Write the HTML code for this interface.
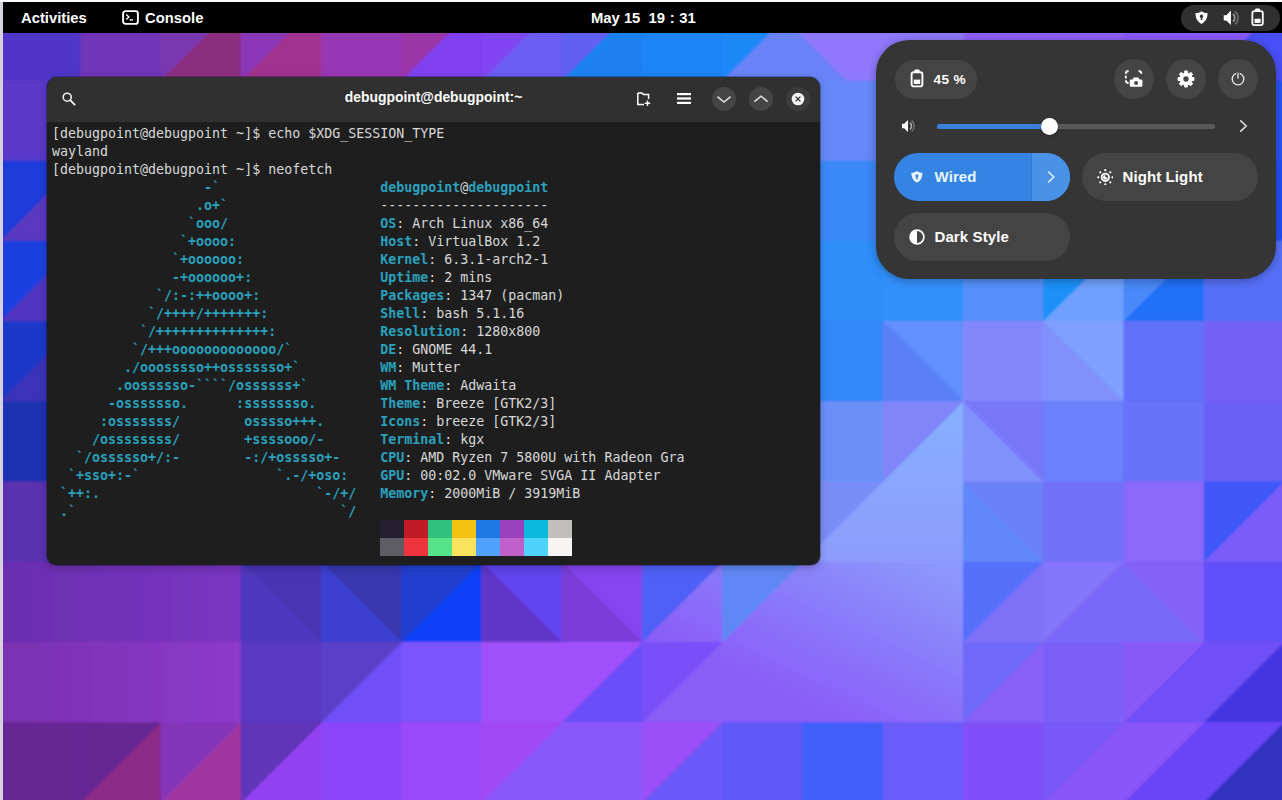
<!DOCTYPE html>
<html lang="en">
<head>
<meta charset="utf-8">
<title>GNOME 44 Wayland - Console</title>
<style>
*{box-sizing:border-box;margin:0;padding:0}
html,body{width:1282px;height:800px;overflow:hidden;background:#fff}
body{position:relative;font-family:"Liberation Sans","DejaVu Sans",sans-serif;color:#fff}
#wall{position:absolute;left:0;top:0;width:1282px;height:800px;display:block}
#edgeL{position:absolute;left:0;top:0;width:3px;height:800px;background:#d6d0e0}
#edgeT{position:absolute;left:0;top:0;width:1282px;height:2px;background:#fbfbfb}
#topbar{position:absolute;left:3px;top:2px;width:1279px;height:31.3px;background:#000;font-weight:bold;font-size:14.8px}
#topbar .t{position:absolute;top:1px;line-height:31px;white-space:pre}
#tray{position:absolute;left:1178px;top:3px;width:99px;height:25.5px;border-radius:13px;background:#303030}
/* terminal */
#term{position:absolute;left:47px;top:77px;width:773px;height:487.5px;border-radius:11px 11px 9px 9px;background:#1e1e1e;overflow:hidden;box-shadow:0 0 0 1px rgba(0,0,0,.25),0 3px 9px rgba(0,0,0,.22)}
#thead{position:absolute;left:0;top:0;width:100%;height:45px;background:#303030}
#ttitle{position:absolute;left:0;top:0;width:773px;text-align:center;line-height:41px;font-weight:bold;font-size:13.9px;color:#fff}
#tbody{position:absolute;left:5px;top:48px;font-family:"DejaVu Sans Mono","Liberation Mono",monospace;font-size:13.3px;line-height:18px;color:#d8d8d8;white-space:pre;letter-spacing:0}
#tbody b{color:#2aa0bc;font-weight:bold}
.sw{position:absolute;width:24px;height:18px}
.cbtn{position:absolute;top:10px;width:24px;height:24px;border-radius:12px;background:#454545}
/* panel */
#qs{position:absolute;left:876px;top:40px;width:400px;height:239px;border-radius:33px;background:#353535;box-shadow:0 2px 10px rgba(0,0,0,.3)}
.pill{position:absolute;background:#444;border-radius:24px;font-weight:bold;font-size:15px;letter-spacing:.1px;line-height:48px;white-space:pre}
.rb{position:absolute;top:19px;width:40px;height:40px;border-radius:20px;background:#454545}
</style>
</head>
<body>
<svg id="wall" width="1282" height="800" viewBox="0 0 1282 800" shape-rendering="geometricPrecision">
<rect width="1282" height="800" fill="#6a50e0"/>
<defs>
<linearGradient id="gA" gradientUnits="userSpaceOnUse" x1="900" y1="550" x2="820" y2="720"><stop offset="0" stop-color="#8c98fc"/><stop offset="0.45" stop-color="#8a7cfa"/><stop offset="1" stop-color="#8a5cf8"/></linearGradient>
<linearGradient id="gL" gradientUnits="userSpaceOnUse" x1="0" y1="401" x2="0" y2="562"><stop offset="0" stop-color="#86b0ff"/><stop offset="1" stop-color="#8e9cfc"/></linearGradient>
<linearGradient id="gR7" gradientUnits="userSpaceOnUse" x1="0" y1="0" x2="241" y2="0"><stop offset="0" stop-color="#6a2eb0"/><stop offset="1" stop-color="#7a36c2"/></linearGradient>
<linearGradient id="gR8" gradientUnits="userSpaceOnUse" x1="0" y1="0" x2="241" y2="0"><stop offset="0" stop-color="#7a30b0"/><stop offset="1" stop-color="#8e3acc"/></linearGradient>
</defs><filter id="bl" x="-2%" y="-2%" width="104%" height="104%"><feGaussianBlur stdDeviation="1.1"/></filter><g filter="url(#bl)"><rect x="0.00" y="0.00" width="80.85" height="80.85" fill="#5035c8"/>
<rect x="80.25" y="0.00" width="80.85" height="80.85" fill="#7035b8"/>
<rect x="160.50" y="0.00" width="80.85" height="80.85" fill="#7a38b0"/>
<polygon points="160.50,80.85 241.35,0.00 241.35,80.85" fill="#8c2d80"/>
<rect x="240.75" y="0.00" width="80.85" height="80.85" fill="#8a38b8"/>
<polygon points="240.75,80.85 321.60,0.00 321.60,80.85" fill="#a03090"/>
<rect x="321.00" y="0.00" width="80.85" height="80.85" fill="#9638b4"/>
<rect x="401.25" y="0.00" width="80.85" height="80.85" fill="#9a35a8"/>
<polygon points="401.25,80.85 482.10,0.00 482.10,80.85" fill="#8040f0"/>
<rect x="481.50" y="0.00" width="80.85" height="80.85" fill="#8045f0"/>
<polygon points="481.50,80.85 562.35,0.00 562.35,80.85" fill="#6a5cf5"/>
<rect x="561.75" y="0.00" width="80.85" height="80.85" fill="#6060f5"/>
<polygon points="561.75,80.85 642.60,0.00 642.60,80.85" fill="#1a80f0"/>
<rect x="642.00" y="0.00" width="80.85" height="80.85" fill="#1c84f6"/>
<rect x="722.25" y="0.00" width="80.85" height="80.85" fill="#1e88f8"/>
<polygon points="722.25,80.85 803.10,0.00 803.10,80.85" fill="#6882f8"/>
<rect x="802.50" y="0.00" width="80.85" height="80.85" fill="#6882f8"/>
<rect x="882.75" y="0.00" width="80.85" height="80.85" fill="#9070fa"/>
<rect x="963.00" y="0.00" width="80.85" height="80.85" fill="#9060f8"/>
<rect x="1043.25" y="0.00" width="80.85" height="80.85" fill="#9060f8"/>
<rect x="1123.50" y="0.00" width="80.85" height="80.85" fill="#8a58f8"/>
<rect x="1203.75" y="0.00" width="80.85" height="80.85" fill="#8a58f8"/>
<polygon points="1203.75,80.85 1284.60,0.00 1284.60,80.85" fill="#4a50f8"/>
<rect x="0.00" y="80.25" width="80.85" height="80.85" fill="#5a38c8"/>
<rect x="802.50" y="80.25" width="80.85" height="80.85" fill="#6688f8"/>
<rect x="1123.50" y="80.25" width="80.85" height="80.85" fill="#2a52f8"/>
<rect x="1203.75" y="80.25" width="80.85" height="80.85" fill="#2a52f8"/>
<rect x="0.00" y="160.50" width="80.85" height="80.85" fill="#1a3ad8"/>
<polygon points="0.00,241.35 80.85,160.50 80.85,241.35" fill="#5a38c0"/>
<rect x="802.50" y="160.50" width="80.85" height="80.85" fill="#3a88f8"/>
<rect x="1123.50" y="160.50" width="80.85" height="80.85" fill="#2050f8"/>
<rect x="1203.75" y="160.50" width="80.85" height="80.85" fill="#2050f8"/>
<rect x="0.00" y="240.75" width="80.85" height="80.85" fill="#1a40e0"/>
<polygon points="0.00,321.60 80.85,240.75 80.85,321.60" fill="#5035c0"/>
<rect x="802.50" y="240.75" width="80.85" height="80.85" fill="#2e8efa"/>
<rect x="882.75" y="240.75" width="80.85" height="80.85" fill="#3290fc"/>
<rect x="963.00" y="240.75" width="80.85" height="80.85" fill="#5590fa"/>
<rect x="1043.25" y="240.75" width="80.85" height="80.85" fill="#1a90f8"/>
<polygon points="1043.25,321.60 1124.10,240.75 1124.10,321.60" fill="#70a0ff"/>
<rect x="1123.50" y="240.75" width="80.85" height="80.85" fill="#4a88f8"/>
<polygon points="1123.50,321.60 1204.35,240.75 1204.35,321.60" fill="#2070f8"/>
<rect x="1203.75" y="240.75" width="80.85" height="80.85" fill="#5570f8"/>
<rect x="0.00" y="321.00" width="80.85" height="80.85" fill="#1a38c8"/>
<polygon points="0.00,401.85 80.85,321.00 80.85,401.85" fill="#3a30b8"/>
<rect x="802.50" y="321.00" width="80.85" height="80.85" fill="#3088f8"/>
<rect x="882.75" y="321.00" width="80.85" height="80.85" fill="#6490fc"/>
<polygon points="882.75,321.00 963.60,401.85 882.75,401.85" fill="#5a80f8"/>
<rect x="963.00" y="321.00" width="80.85" height="80.85" fill="#8288fc"/>
<rect x="1043.25" y="321.00" width="80.85" height="80.85" fill="#80a0ff"/>
<polygon points="1043.25,321.00 1124.10,401.85 1043.25,401.85" fill="#8090fc"/>
<rect x="1123.50" y="321.00" width="80.85" height="80.85" fill="#6070f8"/>
<rect x="1203.75" y="321.00" width="80.85" height="80.85" fill="#7560f8"/>
<rect x="0.00" y="401.25" width="80.85" height="80.85" fill="#1a30b0"/>
<rect x="802.50" y="401.25" width="80.85" height="80.85" fill="#6a90f8"/>
<rect x="882.75" y="401.25" width="80.85" height="80.85" fill="#8086fa"/>
<polygon points="882.75,482.10 963.60,401.25 963.60,482.10" fill="url(#gL)"/>
<rect x="963.00" y="401.25" width="80.85" height="80.85" fill="#7878f8"/>
<polygon points="963.00,401.25 1043.85,482.10 963.00,482.10" fill="#8090fc"/>
<rect x="1043.25" y="401.25" width="80.85" height="80.85" fill="#6a80fc"/>
<rect x="1123.50" y="401.25" width="80.85" height="80.85" fill="#6872fa"/>
<rect x="1203.75" y="401.25" width="80.85" height="80.85" fill="#6a60f8"/>
<rect x="0.00" y="481.50" width="80.85" height="80.85" fill="#5a30b0"/>
<rect x="802.50" y="481.50" width="80.85" height="80.85" fill="#7a8cf8"/>
<polygon points="802.50,562.35 883.35,481.50 883.35,562.35" fill="url(#gL)"/>
<rect x="882.75" y="481.50" width="80.85" height="80.85" fill="url(#gL)"/>
<rect x="963.00" y="481.50" width="80.85" height="80.85" fill="#6a80f8"/>
<polygon points="963.00,481.50 1043.85,562.35 963.00,562.35" fill="#6088f8"/>
<rect x="1043.25" y="481.50" width="80.85" height="80.85" fill="#7070f8"/>
<rect x="1123.50" y="481.50" width="80.85" height="80.85" fill="#8a68f8"/>
<rect x="1203.75" y="481.50" width="80.85" height="80.85" fill="#4058f8"/>
<polygon points="1203.75,562.35 1284.60,481.50 1284.60,562.35" fill="#7a5cf8"/>
<rect x="0.00" y="561.75" width="80.85" height="80.85" fill="url(#gR7)"/>
<rect x="80.25" y="561.75" width="80.85" height="80.85" fill="url(#gR7)"/>
<rect x="160.50" y="561.75" width="80.85" height="80.85" fill="url(#gR7)"/>
<rect x="240.75" y="561.75" width="80.85" height="80.85" fill="#4836b4"/>
<polygon points="240.75,561.75 321.60,642.60 240.75,642.60" fill="#5038c0"/>
<rect x="321.00" y="561.75" width="80.85" height="80.85" fill="#3838b0"/>
<polygon points="321.00,561.75 401.85,642.60 321.00,642.60" fill="#3a40d0"/>
<rect x="401.25" y="561.75" width="80.85" height="80.85" fill="#2040d0"/>
<polygon points="401.25,642.60 482.10,561.75 482.10,642.60" fill="#1040f8"/>
<rect x="481.50" y="561.75" width="80.85" height="80.85" fill="#6045f0"/>
<polygon points="481.50,561.75 562.35,642.60 481.50,642.60" fill="#6035c8"/>
<rect x="561.75" y="561.75" width="80.85" height="80.85" fill="#8545f0"/>
<polygon points="561.75,561.75 642.60,642.60 561.75,642.60" fill="#7a3cd8"/>
<rect x="642.00" y="561.75" width="80.85" height="80.85" fill="#5060f8"/>
<polygon points="642.00,642.60 722.85,561.75 722.85,642.60" fill="url(#gA)"/>
<rect x="722.25" y="561.75" width="80.85" height="80.85" fill="#6088f5"/>
<polygon points="722.25,642.60 803.10,561.75 803.10,642.60" fill="url(#gA)"/>
<rect x="802.50" y="561.75" width="80.85" height="80.85" fill="url(#gA)"/>
<rect x="882.75" y="561.75" width="80.85" height="80.85" fill="url(#gA)"/>
<rect x="963.00" y="561.75" width="80.85" height="80.85" fill="#5570fa"/>
<polygon points="963.00,642.60 1043.85,561.75 1043.85,642.60" fill="#8272f8"/>
<rect x="1043.25" y="561.75" width="80.85" height="80.85" fill="#8575fa"/>
<polygon points="1043.25,642.60 1124.10,561.75 1124.10,642.60" fill="#7a68f8"/>
<rect x="1123.50" y="561.75" width="80.85" height="80.85" fill="#8560f8"/>
<polygon points="1123.50,561.75 1204.35,642.60 1123.50,642.60" fill="#7a68f8"/>
<rect x="1203.75" y="561.75" width="80.85" height="80.85" fill="#6050f8"/>
<rect x="0.00" y="642.00" width="80.85" height="80.85" fill="url(#gR8)"/>
<rect x="80.25" y="642.00" width="80.85" height="80.85" fill="url(#gR8)"/>
<rect x="160.50" y="642.00" width="80.85" height="80.85" fill="url(#gR8)"/>
<rect x="240.75" y="642.00" width="80.85" height="80.85" fill="#5a38c0"/>
<rect x="321.00" y="642.00" width="80.85" height="80.85" fill="#5840c8"/>
<polygon points="321.00,722.85 401.85,642.00 401.85,722.85" fill="#7050f8"/>
<rect x="401.25" y="642.00" width="80.85" height="80.85" fill="#7a55fa"/>
<rect x="481.50" y="642.00" width="80.85" height="80.85" fill="#a050fa"/>
<rect x="561.75" y="642.00" width="80.85" height="80.85" fill="#a050fa"/>
<polygon points="561.75,722.85 642.60,642.00 642.60,722.85" fill="#6a50f8"/>
<rect x="642.00" y="642.00" width="80.85" height="80.85" fill="#7850f8"/>
<polygon points="642.00,722.85 722.85,642.00 722.85,722.85" fill="url(#gA)"/>
<rect x="722.25" y="642.00" width="80.85" height="80.85" fill="url(#gA)"/>
<rect x="802.50" y="642.00" width="80.85" height="80.85" fill="url(#gA)"/>
<rect x="882.75" y="642.00" width="80.85" height="80.85" fill="url(#gA)"/>
<rect x="963.00" y="642.00" width="80.85" height="80.85" fill="#7068f8"/>
<polygon points="963.00,722.85 1043.85,642.00 1043.85,722.85" fill="#8862f8"/>
<rect x="1043.25" y="642.00" width="80.85" height="80.85" fill="#7a60f8"/>
<rect x="1123.50" y="642.00" width="80.85" height="80.85" fill="#8a58f8"/>
<polygon points="1123.50,722.85 1204.35,642.00 1204.35,722.85" fill="#7050f8"/>
<rect x="1203.75" y="642.00" width="80.85" height="80.85" fill="#7050f8"/>
<polygon points="1203.75,722.85 1284.60,642.00 1284.60,722.85" fill="#4535e0"/>
<rect x="0.00" y="722.25" width="80.85" height="80.85" fill="#662894"/>
<rect x="80.25" y="722.25" width="80.85" height="80.85" fill="#662894"/>
<polygon points="80.25,803.10 161.10,722.25 161.10,803.10" fill="#8c2a88"/>
<rect x="160.50" y="722.25" width="80.85" height="80.85" fill="#8535b8"/>
<polygon points="160.50,803.10 241.35,722.25 241.35,803.10" fill="#a035a0"/>
<rect x="240.75" y="722.25" width="80.85" height="80.85" fill="#6035b8"/>
<polygon points="240.75,803.10 321.60,722.25 321.60,803.10" fill="#9040f0"/>
<rect x="321.00" y="722.25" width="80.85" height="80.85" fill="#8a45f8"/>
<rect x="401.25" y="722.25" width="80.85" height="80.85" fill="#9a48fa"/>
<rect x="481.50" y="722.25" width="80.85" height="80.85" fill="#a048f5"/>
<polygon points="481.50,803.10 562.35,722.25 562.35,803.10" fill="#8a58fa"/>
<rect x="561.75" y="722.25" width="80.85" height="80.85" fill="#8a58fa"/>
<rect x="642.00" y="722.25" width="80.85" height="80.85" fill="#9a50f8"/>
<polygon points="642.00,803.10 722.85,722.25 722.85,803.10" fill="#6a58f8"/>
<rect x="722.25" y="722.25" width="80.85" height="80.85" fill="#6058f8"/>
<rect x="802.50" y="722.25" width="80.85" height="80.85" fill="#4060fa"/>
<rect x="882.75" y="722.25" width="80.85" height="80.85" fill="#6a5cf8"/>
<rect x="963.00" y="722.25" width="80.85" height="80.85" fill="#8050f8"/>
<rect x="1043.25" y="722.25" width="80.85" height="80.85" fill="#7858f8"/>
<polygon points="1043.25,803.10 1124.10,722.25 1124.10,803.10" fill="#8a55f8"/>
<rect x="1123.50" y="722.25" width="80.85" height="80.85" fill="#8a55f8"/>
<polygon points="1123.50,803.10 1204.35,722.25 1204.35,803.10" fill="#6a45f8"/>
<rect x="1203.75" y="722.25" width="80.85" height="80.85" fill="#6a45f8"/>
<polygon points="1203.75,803.10 1284.60,722.25 1284.60,803.10" fill="#3030c0"/>
<polygon points="766,0 846,80.5 964,80.5 964,0" fill="#9078fc"/></g>
</svg>
<div id="edgeL"></div>
<div id="edgeT"></div>

<div id="topbar">
  <span class="t" style="left:18px">Activities</span>
  <svg style="position:absolute;left:119px;top:8px" width="17" height="15" viewBox="0 0 17 15"><rect x="1.1" y="1.1" width="14.8" height="12.8" rx="2.4" fill="none" stroke="#fff" stroke-width="1.9"/><path d="M4.3 4.5 L6.9 7 L4.3 9.5" fill="none" stroke="#fff" stroke-width="1.4"/><path d="M7.6 9.9 H11" stroke="#fff" stroke-width="1.4"/></svg>
  <span class="t" style="left:142px">Console</span>
  <span class="t" style="left:588px">May 15  19<span style="padding:0 4.7px">:</span>31</span>
  <div id="tray">
    <svg style="position:absolute;left:13.2px;top:4.8px" width="15" height="15" viewBox="0 0 16 16"><path d="M8 1.2 C6.3 2.6 4.2 3.2 1.6 3.3 C1.5 8.6 3.5 12.4 8 14.8 C12.5 12.4 14.5 8.6 14.4 3.3 C11.8 3.2 9.7 2.6 8 1.2 Z" fill="#fff"/><circle cx="8" cy="6.6" r="1.7" fill="#2a2a2a"/><rect x="7.2" y="7" width="1.6" height="3.6" fill="#2a2a2a"/></svg>
    <svg style="position:absolute;left:41px;top:2.6px" width="19.6" height="19.6" viewBox="0 0 18 18"><path d="M1.6 6.6 H4 L8.2 2.4 V15.6 L4 11.4 H1.6 Z" fill="#fff"/><path d="M10.2 5.4 A5 5 0 0 1 10.2 12.6" fill="none" stroke="#fff" stroke-width="1.5" opacity=".55"/><path d="M12 3 A8 8 0 0 1 12 15" fill="none" stroke="#fff" stroke-width="1.5" opacity=".3"/></svg>
    <svg style="position:absolute;left:69.3px;top:3px" width="15.2" height="19" viewBox="0 0 16 20"><rect x="5.4" y="0.6" width="5.2" height="3" rx="1" fill="#fff"/><rect x="2.5" y="3.3" width="11" height="14.8" rx="2.2" fill="none" stroke="#fff" stroke-width="1.9"/><rect x="4.8" y="11.3" width="6.4" height="4.4" fill="#fff"/></svg>
  </div>
</div>

<div id="term">
  <div id="thead">
    <div id="ttitle">debugpoint@debugpoint:~</div>
    <svg style="position:absolute;left:14.3px;top:14.3px" width="16" height="16" viewBox="0 0 16 16"><circle cx="6.2" cy="6.2" r="4" fill="none" stroke="#eee" stroke-width="1.6"/><path d="M9.2 9.2 L13.6 13.6" stroke="#eee" stroke-width="1.9" stroke-linecap="round"/></svg>
    <svg style="position:absolute;left:589px;top:14px" width="16" height="16" viewBox="0 0 16 16"><path d="M1.8 2 H6 L7.5 3.6 H12.6 V8" fill="none" stroke="#fff" stroke-width="1.5"/><path d="M1.8 2 V13.6 H8" fill="none" stroke="#fff" stroke-width="1.5"/><path d="M11.5 9.6 V15 M8.8 12.3 H14.2" stroke="#fff" stroke-width="1.4"/></svg>
    <svg style="position:absolute;left:630px;top:15px" width="14" height="13" viewBox="0 0 14 13"><rect x="0" y="1" width="14" height="2.2" fill="#fff"/><rect x="0" y="5.4" width="14" height="2.2" fill="#fff"/><rect x="0" y="9.8" width="14" height="2.2" fill="#fff"/></svg>
    <div class="cbtn" style="left:665px"><svg width="24" height="24" viewBox="0 0 24 24"><path d="M5.4 9.6 L12 15 L18.6 9.6" fill="none" stroke="#e0e0e0" stroke-width="1.5"/></svg></div>
    <div class="cbtn" style="left:702px"><svg width="24" height="24" viewBox="0 0 24 24"><path d="M5.4 14.6 L12 9.2 L18.6 14.6" fill="none" stroke="#e0e0e0" stroke-width="1.5"/></svg></div>
    <div class="cbtn" style="left:739px;background:#3c3c3c"><svg width="24" height="24" viewBox="0 0 24 24"><circle cx="12" cy="12" r="6.3" fill="#f4f4f4"/><path d="M9.6 9.6 L14.4 14.4 M14.4 9.6 L9.6 14.4" stroke="#333" stroke-width="1.3"/></svg></div>
  </div>
<div id="tbody">[debugpoint@debugpoint ~]$ echo $XDG_SESSION_TYPE
wayland
[debugpoint@debugpoint ~]$ neofetch
<b>                   -`                    debugpoint</b>@<b>debugpoint</b>
<b>                  .o+`                   </b>---------------------
<b>                 `ooo/                   OS</b>: Arch Linux x86_64
<b>                `+oooo:                  Host</b>: VirtualBox 1.2
<b>               `+oooooo:                 Kernel</b>: 6.3.1-arch2-1
<b>               -+oooooo+:                Uptime</b>: 2 mins
<b>             `/:-:++oooo+:               Packages</b>: 1347 (pacman)
<b>            `/++++/+++++++:              Shell</b>: bash 5.1.16
<b>           `/++++++++++++++:             Resolution</b>: 1280x800
<b>          `/+++ooooooooooooo/`           DE</b>: GNOME 44.1
<b>         ./ooosssso++osssssso+`          WM</b>: Mutter
<b>        .oossssso-````/ossssss+`         WM Theme</b>: Adwaita
<b>       -osssssso.      :ssssssso.        Theme</b>: Breeze [GTK2/3]
<b>      :osssssss/        osssso+++.       Icons</b>: breeze [GTK2/3]
<b>     /ossssssss/        +ssssooo/-       Terminal</b>: kgx
<b>   `/ossssso+/:-        -:/+osssso+-     CPU</b>: AMD Ryzen 7 5800U with Radeon Gra
<b>  `+sso+:-`                 `.-/+oso:    GPU</b>: 00:02.0 VMware SVGA II Adapter
<b> `++:.                           `-/+/   Memory</b>: 2000MiB / 3919MiB
<b> .`                                 `/</b></div>
  <div class="sw" style="left:333px;top:443px;background:#241f31"></div>
  <div class="sw" style="left:357px;top:443px;background:#c01c28"></div>
  <div class="sw" style="left:381px;top:443px;background:#2ec27e"></div>
  <div class="sw" style="left:405px;top:443px;background:#f5c211"></div>
  <div class="sw" style="left:429px;top:443px;background:#1e78e4"></div>
  <div class="sw" style="left:453px;top:443px;background:#9841bb"></div>
  <div class="sw" style="left:477px;top:443px;background:#0ab9dc"></div>
  <div class="sw" style="left:501px;top:443px;background:#c0bfbc"></div>
  <div class="sw" style="left:333px;top:461px;background:#5e5c64"></div>
  <div class="sw" style="left:357px;top:461px;background:#ed333b"></div>
  <div class="sw" style="left:381px;top:461px;background:#57e389"></div>
  <div class="sw" style="left:405px;top:461px;background:#f8e45c"></div>
  <div class="sw" style="left:429px;top:461px;background:#51a1ff"></div>
  <div class="sw" style="left:453px;top:461px;background:#c061cb"></div>
  <div class="sw" style="left:477px;top:461px;background:#4fd2fd"></div>
  <div class="sw" style="left:501px;top:461px;background:#f6f5f4"></div>
</div>

<div id="qs">
  <div class="pill" style="left:18.5px;top:19.5px;width:82px;height:39.5px;line-height:39px;border-radius:20px;font-size:13.6px"><svg style="position:absolute;left:15.5px;top:9.5px" width="14" height="19" viewBox="0 0 14 19"><rect x="4.4" y="0.6" width="5.2" height="3" rx="1" fill="#fff"/><rect x="1.6" y="3.2" width="10.8" height="14.2" rx="2.2" fill="none" stroke="#fff" stroke-width="1.9"/><rect x="3.8" y="10.6" width="6.4" height="4.4" fill="#fff"/></svg><span style="position:absolute;left:39px;letter-spacing:.4px">45 %</span></div>
  <div class="rb" style="left:238px"><svg width="40" height="40" viewBox="0 0 40 40"><path d="M14.6 12 C12.8 12 11.8 13 11.8 14.8" fill="none" stroke="#fff" stroke-width="1.8"/><path d="M24.6 12 C26.4 12 27.4 13 27.4 14.8" fill="none" stroke="#fff" stroke-width="1.8"/><path d="M11.8 21.2 C11.8 23 12.8 24 14.6 24" fill="none" stroke="#fff" stroke-width="1.8"/><path d="M11.8 16.6 V19.4" stroke="#fff" stroke-width="1.8"/><path d="M18.6 20.4 L19.8 18.6 H24.4 L25.6 20.4 H27.2 Q28.4 20.4 28.4 21.6 V26.6 Q28.4 27.8 27.2 27.8 H17 Q15.8 27.8 15.8 26.6 V21.6 Q15.8 20.4 17 20.4 Z" fill="#fff"/><circle cx="22.1" cy="23.9" r="2" fill="#454545"/></svg></div>
  <div class="rb" style="left:290px"><svg width="40" height="40" viewBox="0 0 40 40"><g transform="translate(20 20)"><g fill="#fff"><rect x="-1.9" y="-8.4" width="3.8" height="16.8" rx=".8"/><rect x="-1.9" y="-8.4" width="3.8" height="16.8" rx=".8" transform="rotate(45)"/><rect x="-1.9" y="-8.4" width="3.8" height="16.8" rx=".8" transform="rotate(90)"/><rect x="-1.9" y="-8.4" width="3.8" height="16.8" rx=".8" transform="rotate(135)"/><circle r="6.3"/></g><circle r="2.7" fill="#454545"/></g></svg></div>
  <div class="rb" style="left:342px"><svg width="40" height="40" viewBox="0 0 40 40"><circle cx="20" cy="20" r="5.8" fill="none" stroke="#eee" stroke-width="1.3"/><path d="M20 13.6 V19" stroke="#474747" stroke-width="3.6"/><path d="M20 14.2 V19.4" stroke="#eee" stroke-width="1.3"/></svg></div>
  <svg style="position:absolute;left:24px;top:77px" width="18" height="18" viewBox="0 0 18 18"><path d="M2 6.8 H4.2 L8 3 V15 L4.2 11.2 H2 Z" fill="#fff"/><path d="M10 5.6 A4.6 4.6 0 0 1 10 12.4" fill="none" stroke="#fff" stroke-width="1.5" opacity=".6"/><path d="M11.6 3.4 A7.4 7.4 0 0 1 11.6 14.6" fill="none" stroke="#fff" stroke-width="1.4" opacity=".3"/></svg>
  <div style="position:absolute;left:60.5px;top:83.5px;width:278.5px;height:5px;border-radius:2.5px;background:#595959"></div>
  <div style="position:absolute;left:60.5px;top:83.5px;width:113px;height:5px;border-radius:2.5px;background:#3a80dc"></div>
  <div style="position:absolute;left:165px;top:77.5px;width:17px;height:17px;border-radius:9px;background:#fff;box-shadow:0 1px 3px rgba(0,0,0,.3)"></div>
  <svg style="position:absolute;left:360px;top:78px" width="14" height="16" viewBox="0 0 14 16"><path d="M4.2 2.4 L10.2 8 L4.2 13.6" fill="none" stroke="#d6d6d6" stroke-width="1.7"/></svg>
  <div class="pill" style="left:18px;top:113px;width:176px;height:48px;background:#3584e4;overflow:hidden"><svg style="position:absolute;left:16px;top:17.2px" width="13.8" height="13.8" viewBox="0 0 16 16"><path d="M8 1.2 C6.3 2.6 4.2 3.2 1.6 3.3 C1.5 8.6 3.5 12.4 8 14.8 C12.5 12.4 14.5 8.6 14.4 3.3 C11.8 3.2 9.7 2.6 8 1.2 Z" fill="#e8f4ff"/><circle cx="8" cy="6.6" r="1.8" fill="#3584e4"/><rect x="7.1" y="7" width="1.8" height="3.8" fill="#3584e4"/></svg><span style="position:absolute;left:40.5px;color:#e6f6ff">Wired</span><div style="position:absolute;left:137px;top:0;width:39px;height:48px;background:#4a92e8;border-left:1px solid #2f78d4"></div><svg style="position:absolute;left:150px;top:16px" width="14" height="16" viewBox="0 0 14 16"><path d="M4.2 2.6 L9.8 8 L4.2 13.4" fill="none" stroke="#e0efff" stroke-width="1.5"/></svg></div>
  <div class="pill" style="left:206px;top:113px;width:176px;height:48px"><svg style="position:absolute;left:14.8px;top:15.6px" width="16.6" height="16.6" viewBox="0 0 18 18"><circle cx="9" cy="9" r="4" fill="none" stroke="#fff" stroke-width="2"/><path d="M9 6.4 a2.6 2.6 0 1 0 2.6 2.6 a1.9 1.9 0 0 1 -2.6 -2.6" fill="#fff"/><g fill="#fff"><circle cx="9" cy="1.3" r="1.2"/><circle cx="9" cy="16.7" r="1.2"/><circle cx="1.3" cy="9" r="1.2"/><circle cx="16.7" cy="9" r="1.2"/><circle cx="3.55" cy="3.55" r="1.2"/><circle cx="14.45" cy="3.55" r="1.2"/><circle cx="3.55" cy="14.45" r="1.2"/><circle cx="14.45" cy="14.45" r="1.2"/></g></svg><span style="position:absolute;left:40.5px">Night Light</span></div>
  <div class="pill" style="left:18px;top:172.8px;width:176px;height:48px"><svg style="position:absolute;left:15px;top:16px" width="16" height="16" viewBox="0 0 16 16"><circle cx="8" cy="8" r="6.9" fill="none" stroke="#fff" stroke-width="1.7"/><path d="M8 1 A7 7 0 0 0 8 15 Z" fill="#fff"/></svg><span style="position:absolute;left:40.5px">Dark Style</span></div>
</div>
</body>
</html>
